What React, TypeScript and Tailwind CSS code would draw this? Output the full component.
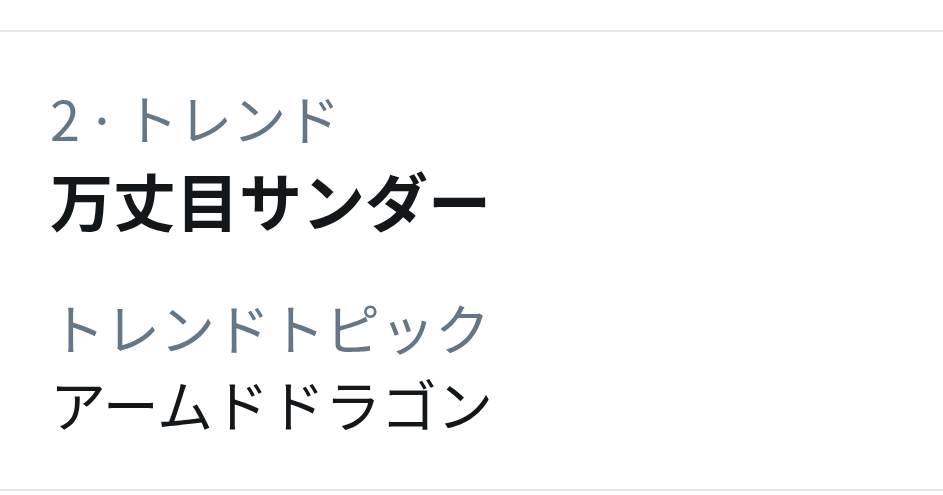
export default function App() {
  const font = {
    fontFamily:
      '"Noto Sans CJK JP", "Noto Sans", "Liberation Sans", sans-serif',
  };
  return (
    <div className="w-[943px] h-[495px] bg-white overflow-hidden" style={font}>
      <div className="mt-[30px] border-t-2 border-b-2 border-[#e1e8ed] pl-[50px] pt-[45px] pb-[48px]">
        <div className="text-[54px] leading-[81px] text-[#657786]">
          2<span className="mx-[7px]">·</span>トレンド
        </div>
        <div className="text-[63px] leading-[81px] font-bold text-[#14171a]">
          万丈目サンダー
        </div>
        <div className="mt-[48px] text-[55px] leading-[78px] text-[#657786]">
          トレンドトピック
        </div>
        <div className="text-[56px] leading-[76px] text-[#14171a]">アームドドラゴン</div>
      </div>
    </div>
  );
}
